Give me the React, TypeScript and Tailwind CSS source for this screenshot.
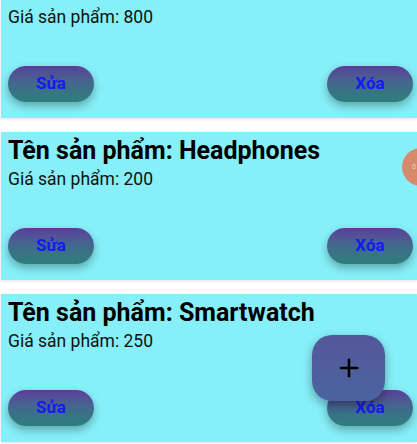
import { Plus } from "lucide-react";

const products = [
  { name: "Laptop", price: 800 },
  { name: "Headphones", price: 200 },
  { name: "Smartwatch", price: 250 },
];

function PillButton({ label }: { label: string }) {
  return (
    <button className="flex h-[36px] w-[86px] items-center justify-center rounded-full bg-gradient-to-b from-[#5b3c9c] via-[#3f6a8c] to-[#2c7f7b] text-[17px] font-bold text-[#1717f5] shadow-[0_4px_8px_rgba(0,0,0,0.3)]">
      {label}
    </button>
  );
}

function ProductCard({
  name,
  price,
  partial,
}: {
  name: string;
  price: number;
  partial?: boolean;
}) {
  return (
    <div
      className={
        partial
          ? "flex h-[118px] flex-col bg-[#86eff8] pl-[7px] pr-[4px] pt-[4px] shadow-[0_1px_3px_rgba(0,0,0,0.12)]"
          : "flex h-[148px] flex-col bg-[#86eff8] pl-[7px] pr-[4px] pt-[4px] shadow-[0_1px_3px_rgba(0,0,0,0.12)]"
      }
    >
      {!partial && (
        <div className="h-[30px] text-[25px] font-bold leading-[30px] text-black">
          Tên sản phẩm: {name}
        </div>
      )}
      <div className="text-[17.5px] leading-[26px] text-[#111]">
        Giá sản phẩm: {price}
      </div>
      <div className="mt-[36px] flex items-center justify-between">
        <PillButton label="Sửa" />
        <PillButton label="Xóa" />
      </div>
    </div>
  );
}

export default function App() {
  return (
    <div
      className="relative h-[444px] w-[417px] overflow-hidden bg-white"
      style={{ fontFamily: "Roboto, 'Noto Sans', sans-serif" }}
    >
      <div className="ml-[1px] flex flex-col gap-[14px]">
        {products.map((p, i) => (
          <ProductCard
            key={p.name}
            name={p.name}
            price={p.price}
            partial={i === 0}
          />
        ))}
      </div>

      <div className="absolute left-[402px] top-[148px] flex h-[38px] w-[38px] items-center justify-center rounded-full bg-[#d68a6c]">
        <span className="ml-[-14px] text-[7px] text-[#f3d3c4]">0</span>
      </div>

      <button className="absolute left-[312px] top-[335px] flex h-[66px] w-[73px] items-center justify-center rounded-[20px] bg-gradient-to-b from-[#545799] to-[#4a64a0] shadow-[0_4px_10px_rgba(0,0,0,0.35)]">
        <Plus className="h-[28px] w-[28px] text-black" strokeWidth={2.2} />
      </button>
    </div>
  );
}
